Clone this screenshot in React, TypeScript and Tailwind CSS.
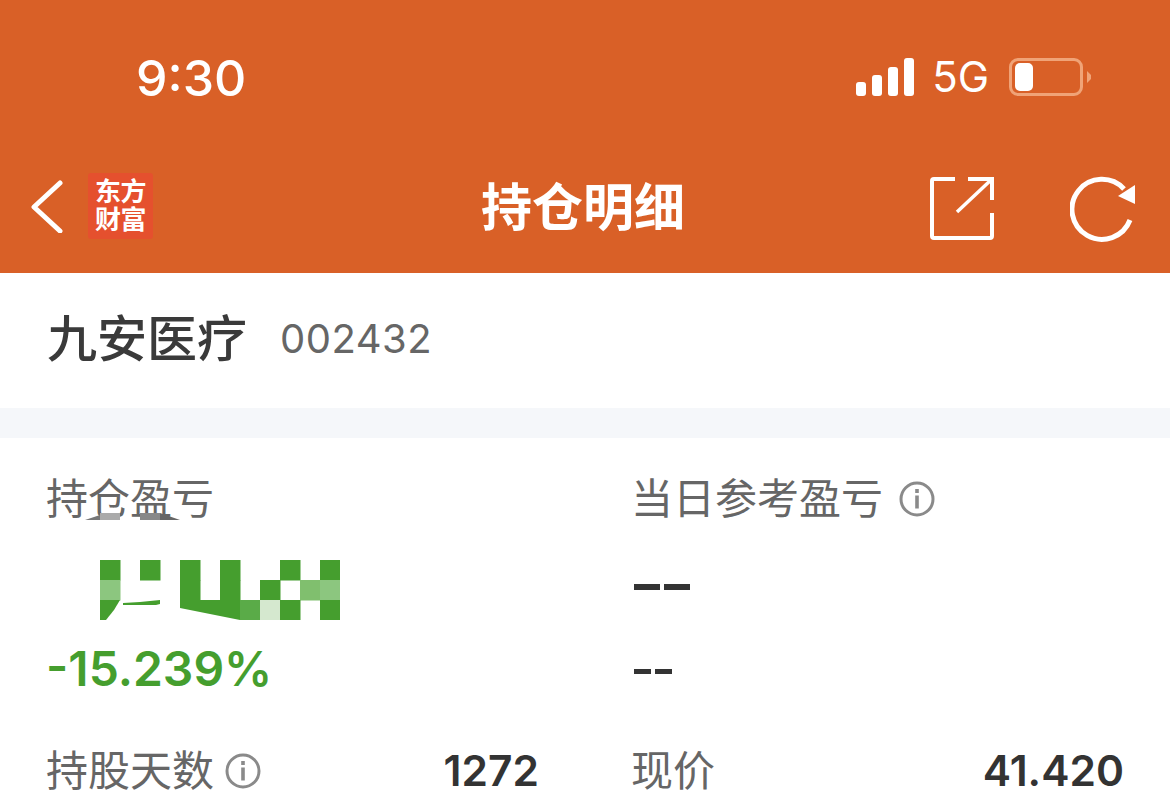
const cjk = "font-['Inter','Noto_Sans_CJK_SC',sans-serif]";

function InfoIcon() {
  return (
    <svg width="36" height="36" viewBox="0 0 36 36" className="shrink-0">
      <circle cx="18" cy="18" r="16" fill="none" stroke="#8a8a8a" strokeWidth="3" />
      <rect x="16.2" y="8" width="3.6" height="4" fill="#8a8a8a" />
      <rect x="16.2" y="14.5" width="3.6" height="13" fill="#8a8a8a" />
    </svg>
  );
}

function Mosaic() {
  const g = '#459e2e';
  const cells: [number, number, string][] = [
    [0, 0, g], [2, 0, g], [4, 0, g], [6, 0, g], [9, 0, g], [11, 0, g],
    [0, 1, '#8cc67f'], [4, 1, g], [6, 1, g], [8, 1, g], [10, 1, '#80bf6e'], [11, 1, '#8cc67f'],
    [7, 2, '#5aab48'], [8, 2, '#d5e8cf'], [9, 2, g], [11, 2, g],
  ];
  return (
    <svg width="240" height="60" viewBox="0 0 240 60" className="ml-[54px] block">
      {cells.map(([x, y, c]) => (
        <rect key={`${x}-${y}`} x={x * 20} y={y * 20} width="20.5" height="20.5" fill={c} />
      ))}
      <path d="M0 40H20L14 50 6 60H0Z" fill={g} />
      <path d="M23 43L40 42 60 40V44L56 45H23Z" fill={g} />
      <path d="M80 40H140V60L80 48Z" fill={g} />
    </svg>
  );
}

export default function App() {
  return (
    <div className={`h-[798px] w-[1170px] overflow-hidden bg-white ${cjk}`}>
      {/* status bar + nav */}
      <div className="h-[273px] bg-[#d96027] text-white">
        <div className="flex h-[155px] items-start pl-[136px] pr-[79px] pt-[47px]">
          <span className="text-[50px] font-medium leading-[62px]">9:30</span>
          <div className="ml-auto flex items-center pt-[11px]">
            <div className="flex items-end gap-[6px]">
              <span className="h-[14px] w-[10px] rounded-[3px] bg-white" />
              <span className="h-[21px] w-[10px] rounded-[3px] bg-white" />
              <span className="h-[29px] w-[10px] rounded-[3px] bg-white" />
              <span className="h-[38px] w-[10px] rounded-[3px] bg-white" />
            </div>
            <span className="ml-[18px] text-[42px] leading-[38px]">5G</span>
            <div className="ml-[20px] flex items-center gap-[4px]">
              <div className="flex h-[38px] w-[74px] items-center rounded-[9px] border-[3px] border-[#f0a377] p-[3px]">
                <span className="h-[28px] w-[18px] rounded-[5px] bg-white" />
              </div>
              <svg width="4" height="12" viewBox="0 0 4 12"><path d="M0 0L4 4V8L0 12Z" fill="#f0a377" /></svg>
            </div>
          </div>
        </div>
        <div className="grid h-[118px] grid-cols-[1fr_auto_1fr] items-start pl-[30px] pr-[34px]">
          <div className="flex items-center pt-[18px]">
            <svg width="34" height="54" viewBox="0 0 34 54">
              <path d="M30 4L4 28L30 52" fill="none" stroke="#fff" strokeWidth="5" strokeLinecap="round" strokeLinejoin="round" />
            </svg>
            <div className="ml-[24px] flex h-[66px] w-[65px] flex-col items-center justify-center rounded-[3px] bg-[#e5502e] text-[26px] font-bold leading-[28px] tracking-[-0.5px]">
              <span>东方</span>
              <span>财富</span>
            </div>
          </div>
          <span className="pt-[19px] text-[51px] font-bold leading-[68px]">持仓明细</span>
          <div className="flex justify-end gap-[76px] pt-[21px]">
            <svg width="64" height="64" viewBox="0 0 64 64" fill="none" stroke="#fff" strokeWidth="4">
              <path d="M25 3H4A2 2 0 0 0 2 5V60A2 2 0 0 0 4 62H60A2 2 0 0 0 62 60V37" />
              <path d="M38 3H62V24" />
              <path d="M62 3L27 36" strokeWidth="3.5" />
            </svg>
            <svg width="66" height="66" viewBox="0 0 66 66" fill="none">
              <path d="M60 44A30 30 0 1 1 54 13" stroke="#fff" strokeWidth="5" />
              <path d="M65 9V28L48 20Z" fill="#fff" />
            </svg>
          </div>
        </div>
      </div>

      {/* stock name */}
      <div className="flex h-[135px] items-center px-[47px] pb-[3px]">
        <span className="text-[50px] font-medium leading-[68px] text-[#3a3a3a]">九安医疗</span>
        <span className="ml-[33px] text-[40px] leading-[48px] tracking-[0.5px] text-[#666]">002432</span>
      </div>
      <div className="h-[30px] bg-[#f5f7fa]" />

      {/* figures */}
      <div className="grid grid-cols-2 gap-x-[92px] px-[46px] pt-[36px]">
        <div>
          <div className="relative h-[50px] text-[42px] leading-[50px] text-[#666]">
            持仓盈亏
            <svg width="100" height="10" viewBox="0 0 100 10" className="absolute left-[39px] top-[39px]">
              <path d="M0 7L15 2V7Z" fill="#777" />
              <rect x="15" y="0" width="20" height="7" fill="#aaa" />
              <rect x="55" y="0" width="20" height="7" fill="#888" />
              <path d="M75 0L95 7H75Z" fill="#666" />
            </svg>
          </div>
          <div className="mt-[36px]"><Mosaic /></div>
          <div className="mt-[18px] text-[48px] font-semibold leading-[62px] text-[#459e2e]">-15.239%</div>
          <div className="mt-[41px] flex h-[60px] items-center">
            <span className="text-[42px] leading-[60px] text-[#666]">持股天数</span>
            <span className="ml-[11px]"><InfoIcon /></span>
            <span className="ml-auto text-[42.5px] font-semibold leading-[60px] text-[#333]">1272</span>
          </div>
        </div>
        <div>
          <div className="flex h-[50px] items-center">
            <span className="text-[42px] leading-[50px] text-[#666]">当日参考盈亏</span>
            <span className="ml-[16px]"><InfoIcon /></span>
          </div>
          <div className="mt-[33px] flex h-[60px] items-center gap-[4px] pl-[3px]">
            <span className="h-[6px] w-[26px] bg-[#333]" />
            <span className="h-[6px] w-[26px] bg-[#333]" />
          </div>
          <div className="mt-[23px] flex h-[62px] items-center gap-[4px] pl-[3px]">
            <span className="h-[5px] w-[17px] bg-[#333]" />
            <span className="h-[5px] w-[17px] bg-[#333]" />
          </div>
          <div className="mt-[39px] flex h-[60px] items-center">
            <span className="text-[42px] leading-[60px] text-[#666]">现价</span>
            <span className="ml-auto text-[42.5px] font-semibold leading-[60px] text-[#333]">41.420</span>
          </div>
        </div>
      </div>
    </div>
  );
}
